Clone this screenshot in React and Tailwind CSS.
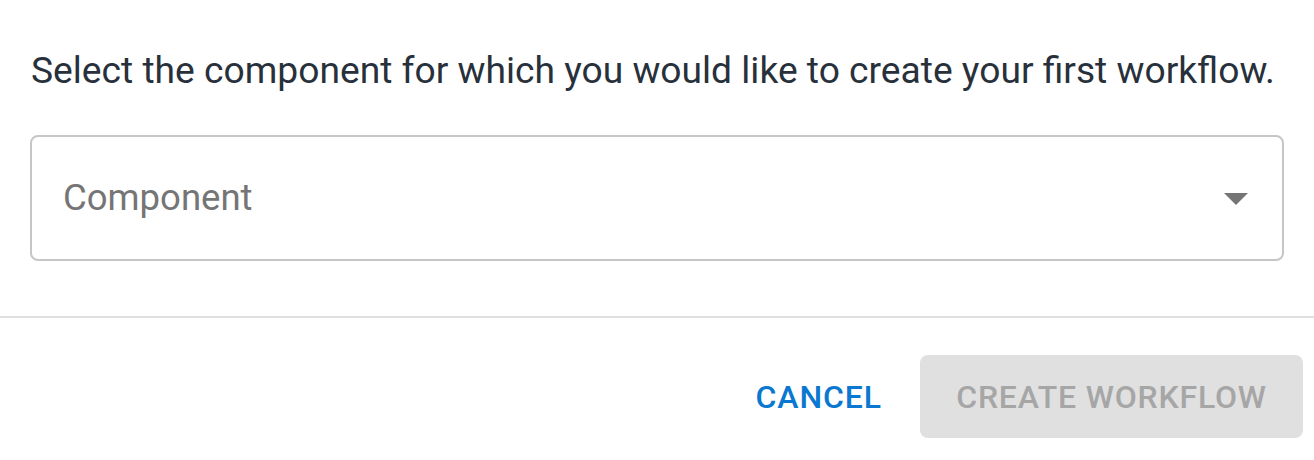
export default function App() {
  return (
    <div className="w-[1314px] h-[460px] bg-white overflow-hidden" style={{ fontFamily: 'Roboto, "Liberation Sans", sans-serif' }}>
      <div className="px-[30px] pt-[42px]">
        <p className="text-[37.2px] leading-[56px] text-[#28313b] whitespace-nowrap pl-[1px]">
          Select the component for which you would like to create your first workflow.
        </p>
        <div className="mt-[37px] h-[126px] w-[1254px] rounded-[8px] border-2 border-[#c6c6c6] flex items-center justify-between pl-[31px] pr-[34px]">
          <span className="text-[36.5px] text-[#757575]">Component</span>
          <svg width="24" height="12" viewBox="0 0 24 12" className="mt-[2px]">
            <path d="M0 0 L24 0 L12 12 Z" fill="#757575" />
          </svg>
        </div>
      </div>
      <div className="mt-[55px] h-[2px] bg-[#e0e0e0]" />
      <div className="flex justify-end items-center gap-[38px] pr-[11px] pt-[37px]">
        <button className="text-[32px] font-medium tracking-[0.9px] text-[#0a78d0] uppercase">Cancel</button>
        <div className="w-[383px] h-[83px] rounded-[8px] bg-[#e0e0e0] flex items-center justify-center text-[32px] font-medium tracking-[0.8px] text-[#a6a6a6] uppercase">
          Create Workflow
        </div>
      </div>
    </div>
  );
}
